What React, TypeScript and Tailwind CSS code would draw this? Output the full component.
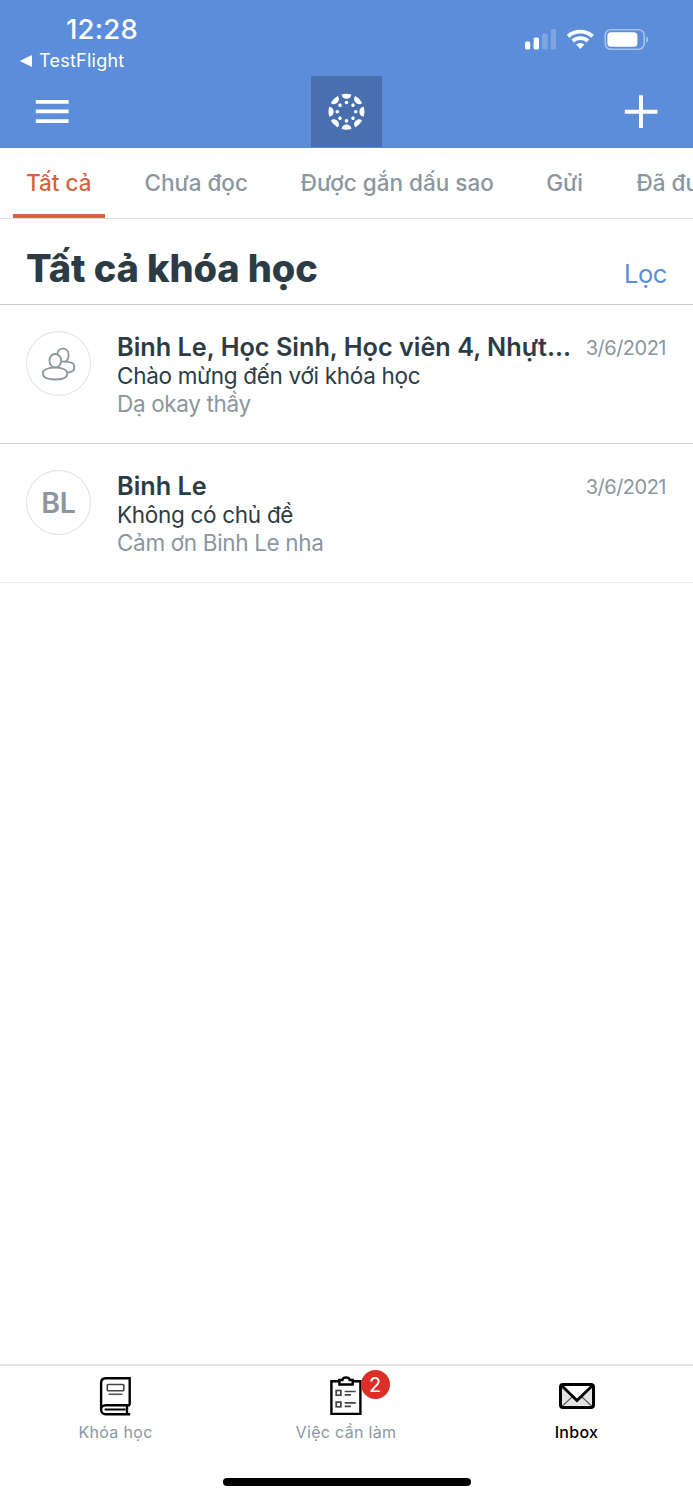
import { ReactNode } from "react";
import clsx from "clsx";

interface Conversation {
  id: number;
  avatar: ReactNode;
  names: string;
  subject: string;
  preview: string;
  date: string;
}

function GroupIcon() {
  return (
    <svg width="36" height="36" viewBox="0 0 36 36" fill="none" stroke="#8b969e" strokeWidth="1.8">
      <path d="M16.2 8.4C16.5 4.8 18.7 2.6 21.9 2.6c3.4 0 5.7 2.5 5.7 6.2 0 3.6-1.6 6.4-3.8 6.9h-3.4" />
      <path d="M23.4 15.7c5.8.2 9.9 1.9 9.9 4.4v2.5c0 1.5-1.1 2.2-2.6 2.8l-4.5 1.6" />
      <rect x="8.5" y="8" width="11.6" height="13.4" rx="5.6" ry="6.4" />
      <path d="M14 21.6c7 0 12.1 2 12.1 5v1.4c0 3.6-4.8 5.5-12.1 5.5S2 31.6 2 28v-1.4c0-3 5-5 12-5Z" />
    </svg>
  );
}

const conversations: Conversation[] = [
  {
    id: 1,
    avatar: <GroupIcon />,
    names: "Binh Le, Học Sinh, Học viên 4, Nhựt...",
    subject: "Chào mừng đến với khóa học",
    preview: "Dạ okay thầy",
    date: "3/6/2021",
  },
  {
    id: 2,
    avatar: <span className="pt-[2px] tracking-[-0.2px]">BL</span>,
    names: "Binh Le",
    subject: "Không có chủ đề",
    preview: "Cảm ơn Binh Le nha",
    date: "3/6/2021",
  },
];

const tabs = [
  { label: "Tất cả", width: "w-[92px]" },
  { label: "Chưa đọc", width: "w-[130px]" },
  { label: "Được gắn dấu sao", width: "w-[219px]" },
  { label: "Gửi", width: "w-[64px]" },
  { label: "Đã được lưu trữ", width: "w-[210px]" },
];

function StatusIcons() {
  return (
    <svg width="126" height="24" viewBox="0 0 126 24" fill="#fff">
      <rect x="1" y="13.4" width="5.2" height="8" rx="1.5" />
      <rect x="9.6" y="9.6" width="5.4" height="11.8" rx="1.5" />
      <rect x="18.2" y="5.4" width="5.4" height="16" rx="1.5" opacity="0.22" />
      <rect x="26.8" y="1" width="5.2" height="20.4" rx="1.5" opacity="0.22" />
      {/* Wifi */}
      <g fill="none" stroke="#fff" strokeWidth="3.9">
        <path d="M44.1 8.2a18.5 18.5 0 0 1 24.4 0" />
        <path d="M48.7 12.9a11.8 11.8 0 0 1 15.2 0" />
      </g>
      <path d="M52.2 16.6a6.2 6.2 0 0 1 8.2 0L56.3 21Z" />
      {/* Battery */}
      <rect x="81.2" y="1.8" width="39" height="19.4" rx="5.6" fill="none" stroke="#fff" strokeWidth="1.6" opacity="0.45" />
      <rect x="83.4" y="4.2" width="30" height="14.6" rx="3.6" />
      <path d="M122.3 8.4c2.6 1 2.6 5.2 0 6.2Z" opacity="0.5" />
    </svg>
  );
}

function CanvasLogo() {
  const angles = [0, 45, 90, 135, 180, 225, 270, 315];
  return (
    <svg width="38" height="38" viewBox="-18.5 -18.7 38 38" fill="#fff">
      {angles.map((angle) => (
        <g key={angle} transform={`rotate(${angle})`}>
          <path d="M-4.9-17.3A18 18 0 0 1 4.9-17.3C4.7-14.5 2.7-12.9 0-12.9S-4.7-14.5-4.9-17.3Z" />
          <circle cx="0" cy="-9.2" r="1.8" />
        </g>
      ))}
    </svg>
  );
}

function BookIcon() {
  return (
    <svg width="34" height="40" viewBox="0 0 34 40" fill="none" stroke="#000" strokeWidth="2.4">
      <path d="M31 29.2H6.6a4.5 4.5 0 0 0 0 9h24.6M28 29.2v9M2.1 34V7.2C2.1 4.2 3.8 2.2 6.6 2.2h24.1v27" />
      <path d="M5.6 33.5h21" strokeWidth="2" />
      <rect x="8.3" y="8.5" width="16.5" height="6.3" rx="0.8" stroke="#444" strokeWidth="1.6" />
      <path d="M9.5 18.3h14" stroke="#555" strokeWidth="1.6" />
    </svg>
  );
}

function TodoIcon() {
  return (
    <svg width="34" height="40" viewBox="0 0 34 40" fill="none" stroke="#000" strokeWidth="2.4">
      <path d="M10.4 5.2H2.4v32.7h29V5.2H23.8" />
      <path d="M10.4 8.5V4h3c.4-3.3 6.9-3.3 7.3 0h3v4.5Z" />
      <g stroke="#444" strokeWidth="1.7">
        <rect x="7.2" y="14.5" width="4.7" height="4.7" />
        <rect x="7.2" y="26.1" width="4.7" height="4.7" />
        <path d="M15.7 15.5h11.1M15.7 18.8h6.2M15.7 26.9h11.1M15.7 30.4h6.2" />
      </g>
    </svg>
  );
}

function InboxIcon() {
  return (
    <svg width="36" height="26" viewBox="0 0 36 26">
      <rect x="1.4" y="1.4" width="33.2" height="23.2" rx="2" fill="#e4e4e4" />
      <path d="M2.5 2.5 18 17 33.5 2.5Z" fill="#fff" />
      <path d="M3 23.4 13 14M33 23.4 23 14" stroke="#555" strokeWidth="1.2" />
      <path d="m3 3 15 14.5L33 3" fill="none" stroke="#000" strokeWidth="2.8" />
      <rect x="1.5" y="1.5" width="33" height="23" rx="2.5" fill="none" stroke="#000" strokeWidth="3" />
    </svg>
  );
}

export default function App() {
  return (
    <div className="flex h-[1500px] w-[693px] flex-col overflow-hidden bg-white font-['Inter','Noto_Sans',sans-serif] text-[#2d3b45]">
      {/* Header */}
      <header className="h-[148px] shrink-0 bg-[#5b8dda] text-white">
        <div className="flex h-[76px] justify-between">
          <div className="flex flex-col pt-[13px] pl-[20px]">
            <span className="pl-[46px] text-[27.5px] leading-[33px] font-medium tracking-[0.2px] whitespace-nowrap">12:28</span>
            <span className="mt-[4px] flex items-center gap-[7px] text-[18px] leading-[22px] tracking-[0.25px]">
              <svg width="12" height="12" viewBox="0 0 12 12" fill="#fff">
                <path d="M.8 5.4 10.8.5Q12 0 12 1.2v9.6q0 1.2-1.2.7L.8 6.6Q-.2 6 .8 5.4Z" />
              </svg>
              TestFlight
            </span>
          </div>
          <div className="pt-[28px] pr-[43px]">
            <StatusIcons />
          </div>
        </div>
        <div className="flex h-[71px] items-center justify-between pr-[35px] pl-[35px]">
          <button className="w-[34px]">
            <svg width="34" height="24" viewBox="0 0 34 24" fill="#fff">
              <path d="M.8 0h32.8v3.8H.8ZM.8 9.5h32.8v3.8H.8ZM.8 19.2h32.8V23H.8Z" />
            </svg>
          </button>
          <div className="flex size-[71px] items-center justify-center bg-[#4970ae]">
            <CanvasLogo />
          </div>
          <button>
            <svg width="34" height="34" viewBox="0 0 34 34" stroke="#fff" strokeWidth="4">
              <path d="M17 .3v32.8M.8 16.7h32.6" />
            </svg>
          </button>
        </div>
      </header>

      {/* Tabs */}
      <nav className="flex h-[71px] shrink-0 gap-[26.4px] overflow-hidden border-b border-[#dcdee0] pl-[13px] text-[22.5px] font-medium">
        {tabs.map((tab, i) => (
          <button
            key={tab.label}
            className={clsx(
              "flex h-[70px] shrink-0 justify-start border-b-4 pt-[18px] pl-[13px] leading-[34px] whitespace-nowrap",
              tab.width,
              i === 0 ? "border-[#d5643e] text-[#d5643e]" : "border-transparent text-[#8b969e]"
            )}
          >
            {tab.label}
          </button>
        ))}
      </nav>

      {/* Title */}
      <div className="flex h-[86px] shrink-0 items-start justify-between border-b border-[#c7cdd1] pr-[26px] pl-[26px]">
        <h1 className="pt-[25px] text-[38px] leading-[48px] font-extrabold tracking-[-0.1px]">Tất cả khóa học</h1>
        <button className="pt-[39px] text-[25.5px] leading-[32px] tracking-[-0.4px] text-[#5b8dda]">Lọc</button>
      </div>

      {/* Conversations */}
      <main className="grow">
        {conversations.map((item) => (
          <div key={item.id} className="flex h-[139px] border-b border-[#cdd1d5] pt-[26px] pr-[27px] pl-[26px] last:border-[#e8eaec]">
            <div className="flex size-[65px] shrink-0 items-center justify-center rounded-full border border-[#dcdee0] text-[28.5px] font-semibold text-[#8b969e]">
              {item.avatar}
            </div>
            <div className="ml-[26px] grow whitespace-nowrap">
              <p className="text-[25.25px] leading-[32px] font-semibold">{item.names}</p>
              <p className="text-[22.5px] leading-[26px] tracking-[-0.3px]">{item.subject}</p>
              <p className="text-[22.5px] leading-[30px] tracking-[-0.34px] text-[#8b969e]">{item.preview}</p>
            </div>
            <span className="text-[20px] leading-[34px] tracking-[-0.5px] text-[#8b969e]">{item.date}</span>
          </div>
        ))}
      </main>

      {/* Tab bar */}
      <footer className="h-[136px] shrink-0 border-t-2 border-[#e2e2e4] text-[16px] tracking-[0.32px]">
        <div className="flex h-[78px] text-[#8b969e]">
          <button className="flex w-[231px] flex-col items-center pt-[10px]">
            <BookIcon />
            <span className="mt-[6px] leading-[20px]">Khóa học</span>
          </button>
          <button className="flex w-[230px] flex-col items-center pt-[10px]">
            <span className="relative">
              <TodoIcon />
              <span className="absolute -top-[6px] left-[31.5px] flex size-[29px] items-center justify-center rounded-full bg-[#dc2f28] text-[20px] tracking-normal text-white">
                2
              </span>
            </span>
            <span className="mt-[6px] leading-[20px]">Việc cần làm</span>
          </button>
          <button className="flex w-[231px] flex-col items-center pt-[17px] font-medium text-black">
            <InboxIcon />
            <span className="mt-[13px] leading-[20px]">Inbox</span>
          </button>
        </div>
        <div className="mx-auto mt-[34px] h-[8px] w-[248px] rounded-full bg-black" />
      </footer>
    </div>
  );
}
